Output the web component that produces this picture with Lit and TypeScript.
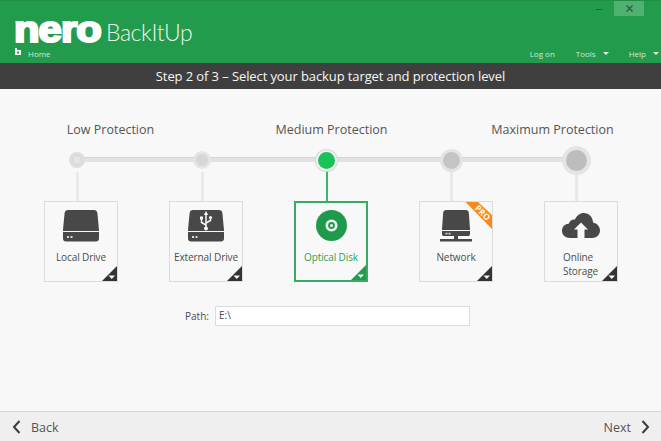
import { LitElement, html, css, svg } from "lit";
import { customElement } from "lit/decorators.js";

const driveBody = svg`<path d="M5 0H31C33 0 34 1 34.4 3L36 20V21H0V20L1.600 3C2 1 3 0 5 0Z"/><path d="M0 22H36V28.500C36 30.500 34.800 31.500 33 31.500H3C1.200 31.500 0 30.500 0 28.500Z"/><rect x="4" y="26" width="2" height="2" fill="#fff" opacity=".8"/><rect x="7.500" y="26" width="2" height="2" fill="#fff" opacity=".8"/>`;

const icons: Record<string, unknown> = {
  local: html`<svg class="ic" width="36" height="32" viewBox="0 0 36 32">${driveBody}</svg>`,
  usb: html`<svg class="ic" width="36" height="32" viewBox="0 0 36 32">${driveBody}
    <g fill="none" stroke="#f8f8f8" stroke-width="1.500"><path d="M18 3V18"/><path d="M18 15L13.500 12.500V9"/><path d="M18 13L22.500 10.500V8.500"/></g>
    <path d="M18 1L20.200 5H15.800Z" fill="#f8f8f8"/><circle cx="18" cy="18.500" r="2" fill="#f8f8f8"/><rect x="12" y="6.500" width="3" height="3" fill="#f8f8f8"/><circle cx="22.500" cy="7.500" r="1.600" fill="#f8f8f8"/></svg>`,
  disk: html`<svg class="ic" width="31" height="31" viewBox="0 0 31 31"><circle cx="15.500" cy="15.500" r="15.500" fill="#1f9a4c"/><circle cx="15.500" cy="15.500" r="6" fill="#f1f8f3"/><circle cx="15.500" cy="15.500" r="3.400" fill="#1f9a4c"/><circle cx="15.500" cy="15.500" r="1.500" fill="#f1f8f3"/></svg>`,
  network: html`<svg class="ic" width="32" height="32" viewBox="0 0 32 32"><path d="M6 0H26C27.500 0 28.500 1 28.800 2.500L30 19V20H2V19L3.200 2.500C3.500 1 4.500 0 6 0Z"/><path d="M2 21H30V24C30 25.500 29 26 28 26H4C3 26 2 25.500 2 24Z"/><rect x="5.500" y="22.800" width="2" height="1.600" fill="#fff" opacity=".8"/><rect x="8.500" y="22.800" width="2" height="1.600" fill="#fff" opacity=".8"/><rect x="14" y="26" width="4" height="3.500"/><rect x="0" y="29" width="32" height="2.500"/></svg>`,
  cloud: html`<svg class="ic" width="38" height="25" viewBox="0 0 38 25"><path d="M8 25C3.500 25 0 22 0 17.800C0 13.800 3 11 6.800 10.800C7.500 7.800 10.200 6 13 6.500C14.800 2.500 18 0 21.800 0C27 0 30.800 4 31 9.500C35 10.300 38 13.500 38 17.500C38 22 34.500 25 30 25H22.500V16.500H26L19 9.500L12 16.500H15.500V25Z"/></svg>`,
};

const items = [
  { id: "local", label: "Local Drive" },
  { id: "usb", label: "External Drive" },
  { id: "disk", label: "Optical Disk", active: true },
  { id: "network", label: "Network", pro: true },
  { id: "cloud", label: "Online Storage", wrap: true },
];

const nodes = ["n1", "n2", "n3", "n4", "n5"];

@customElement("app-root")
export class AppRoot extends LitElement {
  static styles = css`
    :host { display: block; width: 661px; height: 441px; font-family: "Open Sans", "Noto Sans", sans-serif; background: #f8f8f8; color: #444; overflow: hidden; }
    .app { display: flex; flex-direction: column; height: 441px; }

    .header { height: 63px; box-sizing: border-box; background: #239b4d; border-top: 1px solid #1f8f46; position: relative; color: #fff; display: flex; flex-direction: column; justify-content: flex-end; }
    .winctl { position: absolute; top: 0; right: 17px; display: flex; align-items: stretch; height: 15px; }
    .min { width: 30px; display: flex; align-items: center; justify-content: center; }
    .min i { display: block; width: 6px; height: 1px; margin-top: 2px; background: #2c5a3c; }
    .close { width: 30px; background: #4fb06f; display: flex; align-items: center; justify-content: center; }
    .brand { display: flex; align-items: baseline; padding-left: 14px; height: 30px; }
    .nero { font-family: "Liberation Sans", sans-serif; font-weight: 700; font-size: 36px; line-height: 30px; letter-spacing: -0.8px; -webkit-text-stroke: 2.200px #fff; display: inline-block; width: 91px; transform: scaleX(1.160); transform-origin: left center; white-space: nowrap; }
    .app-name { font-family: "Lato", sans-serif; font-weight: 300; font-size: 23px; line-height: 30px; color: #eaf6ee; letter-spacing: -0.45px; margin-left: 1px; transform: translateY(-1px); }
    .nav { display: flex; align-items: center; height: 14px; margin: 1px 0 3px; font-size: 8px; color: #cfe9d8; padding-left: 15px; }
    .home { display: flex; align-items: center; gap: 7px; flex: 1; }
    .home svg { margin-top: -3px; }
    .menu { display: flex; align-items: center; }
    .menu span { display: flex; align-items: center; gap: 7px; }
    .logon { margin-right: 21px; }
    .tools { margin-right: 20px; }
    .help { margin-right: 2px; }
    .caret { width: 0; height: 0; border-left: 3px solid transparent; border-right: 3px solid transparent; border-top: 3px solid #e6f4ea; }

    .step { height: 26px; background: #3f3f3f; color: #f6f6f6; display: flex; align-items: center; justify-content: center; font-size: 13px; letter-spacing: -0.1px; }

    .main { flex: 1; display: flex; flex-direction: column; background: #f8f8f8; }
    .levels { display: grid; grid-template-columns: 221px 221px 221px; padding: 31px 0 0 0; font-size: 12.500px; line-height: 20px; color: #555; text-align: center; margin-bottom: 6px; }
    .rail { position: relative; display: grid; grid-template-columns: repeat(5, 124.750px); padding-left: 15px; height: 55px; }
    .rail::before { content: ""; position: absolute; left: 78px; width: 498px; top: 11px; height: 5px; background: #e2e2e2; border-top: 1px solid #d4d4d4; box-sizing: border-box; }
    .col { display: flex; flex-direction: column; align-items: center; position: relative; }
    .slot { height: 28px; display: flex; align-items: center; justify-content: center; margin-bottom: -2px; z-index: 1; }
    .stem { flex: 1; width: 3px; background: #e9e9e9; }
    .col.on .stem { width: 2px; background: #3fb56b; }
    .node { box-sizing: border-box; border-radius: 50%; background: #cdcdcd; border: 3px solid #e4e4e4; }
    .n1 { width: 16px; height: 16px; background: #e4e4e4; border-color: #dedede; box-shadow: inset 0 0 0 1px #d2d2d2; }
    .n2 { width: 18px; height: 18px; background: #d6d6d6; }
    .n3 { width: 21px; height: 21px; background: #19c35a; border: 2px solid #f4f4f4; box-shadow: 0 0 0 1px #d8d8d8; }
    .n4 { width: 23px; height: 23px; background: #c4c4c4; border-width: 3px; }
    .n5 { width: 29px; height: 29px; background: #bdbdbd; border-width: 4px; }

    .cards { display: grid; grid-template-columns: repeat(5, 74px); column-gap: 51px; padding-left: 44px; }
    .card { box-sizing: border-box; position: relative; height: 81px; background: #f8f8f8; border: 1px solid #dcdcdc; display: flex; flex-direction: column; align-items: center; overflow: hidden; }
    .card.on { border: 2px solid #39aa63; color: #2f9f58; }
    .iconbox { height: 41px; margin-top: 3px; display: flex; align-items: center; justify-content: center; }
    .card.on .iconbox { margin-top: 2px; }
    .ic { fill: #484848; display: block; }
    .label { font-size: 10px; line-height: 14px; margin-top: 4px; text-align: center; white-space: nowrap; letter-spacing: -0.1px; color: #4c4c4c; }
    .card.on .label { color: #2f9f58; margin-top: 4px; }
    .label.wrap { white-space: normal; width: 40px; text-align: left; margin-left: 4px; }
    .corner { position: absolute; right: 0; bottom: 0; display: block; }
    .pro { position: absolute; top: 0; right: 0; display: block; }
    .pro-text { position: absolute; top: 6px; right: -3px; width: 24px; text-align: center; font-size: 8.500px; line-height: 9px; font-weight: 700; color: #fff3e0; transform: rotate(45deg); }

    .path { display: flex; align-items: center; margin: 24px 0 0 185px; font-size: 10px; color: #4c4c4c; }
    .path label { width: 30px; }
    .field { box-sizing: border-box; width: 255px; height: 20px; background: #fff; border: 1px solid #dcdcdc; font-size: 10px; padding: 0 3px; line-height: 16px; color: #4c4c4c; }

    .footer { height: 30px; box-sizing: border-box; background: #efefef; border-top: 1px solid #d4d4d4; display: flex; align-items: center; justify-content: space-between; padding: 1px 11px 0 12px; font-size: 12.500px; color: #555; }
    .btn { display: flex; align-items: center; gap: 10px; }
    .btn svg { display: block; }
  `;

  private corner(on: boolean) {
    const bg = on ? "#239b4d" : "#333";
    return html`<svg class="corner" width="15" height="15" viewBox="0 0 15 15"><path d="M15 0V15H0Z" fill="${bg}"/><path d="M6.500 9.500H13L9.750 13Z" fill="#f8f8f8"/></svg>`;
  }

  render() {
    return html`<div class="app">
      <header class="header">
        <div class="winctl">
          <div class="min"><i></i></div>
          <div class="close"><svg width="7" height="7" viewBox="0 0 7 7"><path d="M.5.500L6.500 6.500M6.500.500L.5 6.500" stroke="#2c5a3c" stroke-width="1.200"/></svg></div>
        </div>
        <div class="brand"><span class="nero">nero</span><span class="app-name">BackItUp</span></div>
        <div class="nav">
          <div class="home"><svg width="6" height="7" viewBox="0 0 6 7"><path d="M0 0H2V2H6V7H0Z" fill="#fff"/><rect x="2" y="3.500" width="2" height="2" fill="#239b4d"/></svg><span>Home</span></div>
          <div class="menu">
            <span class="logon">Log on</span>
            <span class="tools">Tools <i class="caret"></i></span>
            <span class="help">Help <i class="caret"></i></span>
          </div>
        </div>
      </header>
      <div class="step">Step 2 of 3 – Select your backup target and protection level</div>
      <main class="main">
        <div class="levels"><span>Low Protection</span><span>Medium Protection</span><span>Maximum Protection</span></div>
        <div class="rail">
          ${nodes.map((n, i) => html`<div class="col ${items[i].active ? "on" : ""}"><div class="slot"><div class="node ${n}"></div></div><div class="stem"></div></div>`)}
        </div>
        <div class="cards">
          ${items.map((it) => html`<div class="card ${it.active ? "on" : ""}">
            <div class="iconbox">${icons[it.id]}</div>
            <div class="label ${it.wrap ? "wrap" : ""}">${it.label}</div>
            ${it.pro ? html`<svg class="pro" width="28" height="28" viewBox="0 0 28 28"><path d="M1.500 0H14L28 13V27Z" fill="#f58a1f"/></svg><div class="pro-text">PRO</div>` : ""}
            ${this.corner(!!it.active)}
          </div>`)}
        </div>
        <div class="path"><label>Path:</label><div class="field">E:\\</div></div>
      </main>
      <footer class="footer">
        <div class="btn"><svg width="9" height="14" viewBox="0 0 9 14"><path d="M7.500 1L2 7L7.500 13" fill="none" stroke="#3c3c3c" stroke-width="2"/></svg>Back</div>
        <div class="btn">Next<svg width="9" height="14" viewBox="0 0 9 14"><path d="M1.500 1L7 7L1.500 13" fill="none" stroke="#3c3c3c" stroke-width="2"/></svg></div>
      </footer>
    </div>`;
  }
}
